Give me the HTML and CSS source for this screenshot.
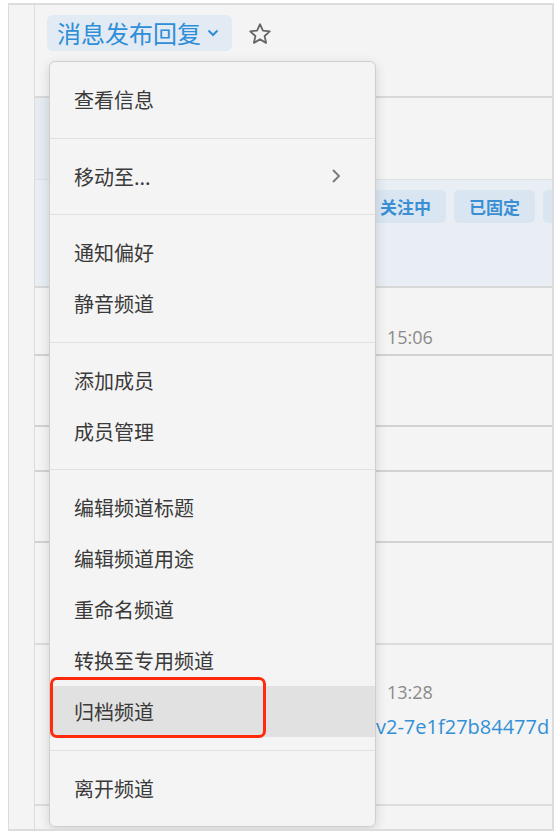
FILE: index.html
```html
<!DOCTYPE html>
<html>
	<head>
		<meta charset="UTF-8">
		<title>消息发布回复</title>
		<link rel="stylesheet" href="styles.css">
	</head>
	<body>
		<div class="frame">
			<div class="gutter"></div>

			<div class="main">
				<div class="header">
					<span class="channelTitle">
						消息发布回复
						<svg class="caret" width="12" height="8" viewBox="0 0 12 8"><polyline points="1.5,1.5 6,6 10.5,1.5" fill="none" stroke="#2e8ed8" stroke-width="2"/></svg>
					</span>
					<svg class="star" width="24" height="24" viewBox="0 0 24 24"><polygon points="12,2.2 14.9,8.6 21.8,9.3 16.6,14 18.1,20.9 12,17.4 5.9,20.9 7.4,14 2.2,9.3 9.1,8.6" fill="none" stroke="#666" stroke-width="1.8" stroke-linejoin="round"/></svg>
				</div>

				<div class="toolbar"></div>

				<div class="filterBand">
					<div class="chips">
						<span class="chip">关注中</span>
						<span class="chip">已固定</span>
						<span class="chip"></span>
					</div>
				</div>

				<div class="row rowA"><span class="time">15:06</span></div>
				<div class="row rowB"></div>
				<div class="row rowC"></div>
				<div class="row rowD"></div>
				<div class="row rowE"></div>
				<div class="row rowF">
					<span class="time">13:28</span>
					<span class="link">v2-7e1f27b84477d</span>
				</div>
				<div class="row rowG"></div>
			</div>

			<!-- channel dropdown menu -->
			<div class="menu">
				<ul class="group">
					<li class="item">查看信息</li>
				</ul>
				<ul class="group">
					<li class="item">移动至...
						<svg class="arrow" width="10" height="16" viewBox="0 0 10 16"><polyline points="2,2 8,8 2,14" fill="none" stroke="#777" stroke-width="1.8"/></svg>
					</li>
				</ul>
				<ul class="group">
					<li class="item">通知偏好</li>
					<li class="item">静音频道</li>
				</ul>
				<ul class="group">
					<li class="item">添加成员</li>
					<li class="item">成员管理</li>
				</ul>
				<ul class="group">
					<li class="item">编辑频道标题</li>
					<li class="item">编辑频道用途</li>
					<li class="item">重命名频道</li>
					<li class="item">转换至专用频道</li>
					<li class="item active">归档频道<span class="mark"></span></li>
				</ul>
				<ul class="group">
					<li class="item">离开频道</li>
				</ul>
			</div>
		</div>
	</body>
</html>
```

FILE: styles.css
```css
body {
	margin: 0;
	background-color: #ffffff;
	font-family: "Noto Sans CJK SC", "Open Sans", sans-serif;
}
.frame {
	position: relative;
	display: flex;
	margin: 3px 0 0 8px;
	width: 543px;
	height: 824px;
	box-sizing: content-box;
	border: 2px solid #dcdcdc;
	border-left-width: 1px;
	background-color: #f4f4f4;
	overflow: hidden;
}
.gutter {
	width: 25px;
	flex-shrink: 0;
	border-right: 1px solid #dcdcdc;
}
.main {
	flex: 1;
	min-width: 0;
	overflow: hidden;
}
.header {
	display: flex;
	align-items: flex-start;
	gap: 16px;
	height: 93px;
	padding: 10px 0 0 12px;
	box-sizing: border-box;
	border-bottom: 2px solid #d8d8d8;
}
.channelTitle {
	display: flex;
	align-items: center;
	gap: 6px;
	height: 36px;
	padding: 0 13px 0 10px;
	border-radius: 6px;
	background-color: #e2eaf3;
	color: #2e8ed8;
	font-size: 24px;
	line-height: 36px;
}
.star {
	margin-top: 7px;
}
.toolbar {
	height: 81px;
	border-bottom: 1px solid #dde2e6;
	background: linear-gradient(to right, #e5ebf0 14px, #f4f4f4 14px);
}
.filterBand {
	height: 106px;
	background-color: #e8eef3;
	border-bottom: 2px solid #d8d8d8;
}
.chips {
	display: flex;
	gap: 8px;
	padding: 10px 0 0 330px;
	white-space: nowrap;
}
.chip {
	display: inline-block;
	flex-shrink: 0;
	min-width: 20px;
	padding: 0 15px;
	height: 33px;
	line-height: 33px;
	border-radius: 5px;
	background-color: #d9e6f2;
	color: #3a8fd4;
	font-size: 17px;
	font-weight: 600;
}
.row {
	position: relative;
	border-bottom: 2px solid #d2d2d2;
	box-sizing: border-box;
}
.rowA { height: 68px; }
.rowB { height: 71px; }
.rowC { height: 45px; }
.rowD { height: 71px; }
.rowE { height: 102px; border-bottom-color: #dcdcdc; }
.rowF { height: 161px; border-bottom-color: #dcdcdc; }
.rowG { height: 40px; }
.time {
	display: block;
	padding-left: 352px;
	color: #8a8a8a;
	font-family: "Open Sans", sans-serif;
	font-size: 18px;
}
.rowA .time {
	padding-top: 37px;
}
.rowF .time {
	padding-top: 35px;
}
.link {
	display: block;
	padding-left: 341px;
	margin-top: 9px;
	white-space: nowrap;
	color: #3390d6;
	font-family: "Open Sans", sans-serif;
	font-size: 20px;
}
.menu {
	position: absolute;
	left: 40px;
	top: 56px;
	width: 325px;
	border: 1px solid #cfcfcf;
	border-radius: 6px;
	background-color: #f4f4f4;
	box-shadow: 0 3px 12px rgba(0, 0, 0, 0.14);
}
.group {
	list-style-type: none;
	margin: 0;
	padding: 12px 0 12.5px;
	border-bottom: 1px solid #e0e0e0;
}
.group:last-child {
	border-bottom: none;
}
.item {
	position: relative;
	display: flex;
	align-items: center;
	justify-content: space-between;
	height: 51px;
	padding: 0 34px 0 24px;
	color: #3a3a3a;
	font-size: 20px;
}
.item.active {
	background-color: #e1e1e1;
}
.mark {
	position: absolute;
	left: 0;
	top: -9px;
	width: 216px;
	height: 61px;
	box-sizing: border-box;
	border: 3px solid #ff2b0c;
	border-radius: 7px;
}
```
